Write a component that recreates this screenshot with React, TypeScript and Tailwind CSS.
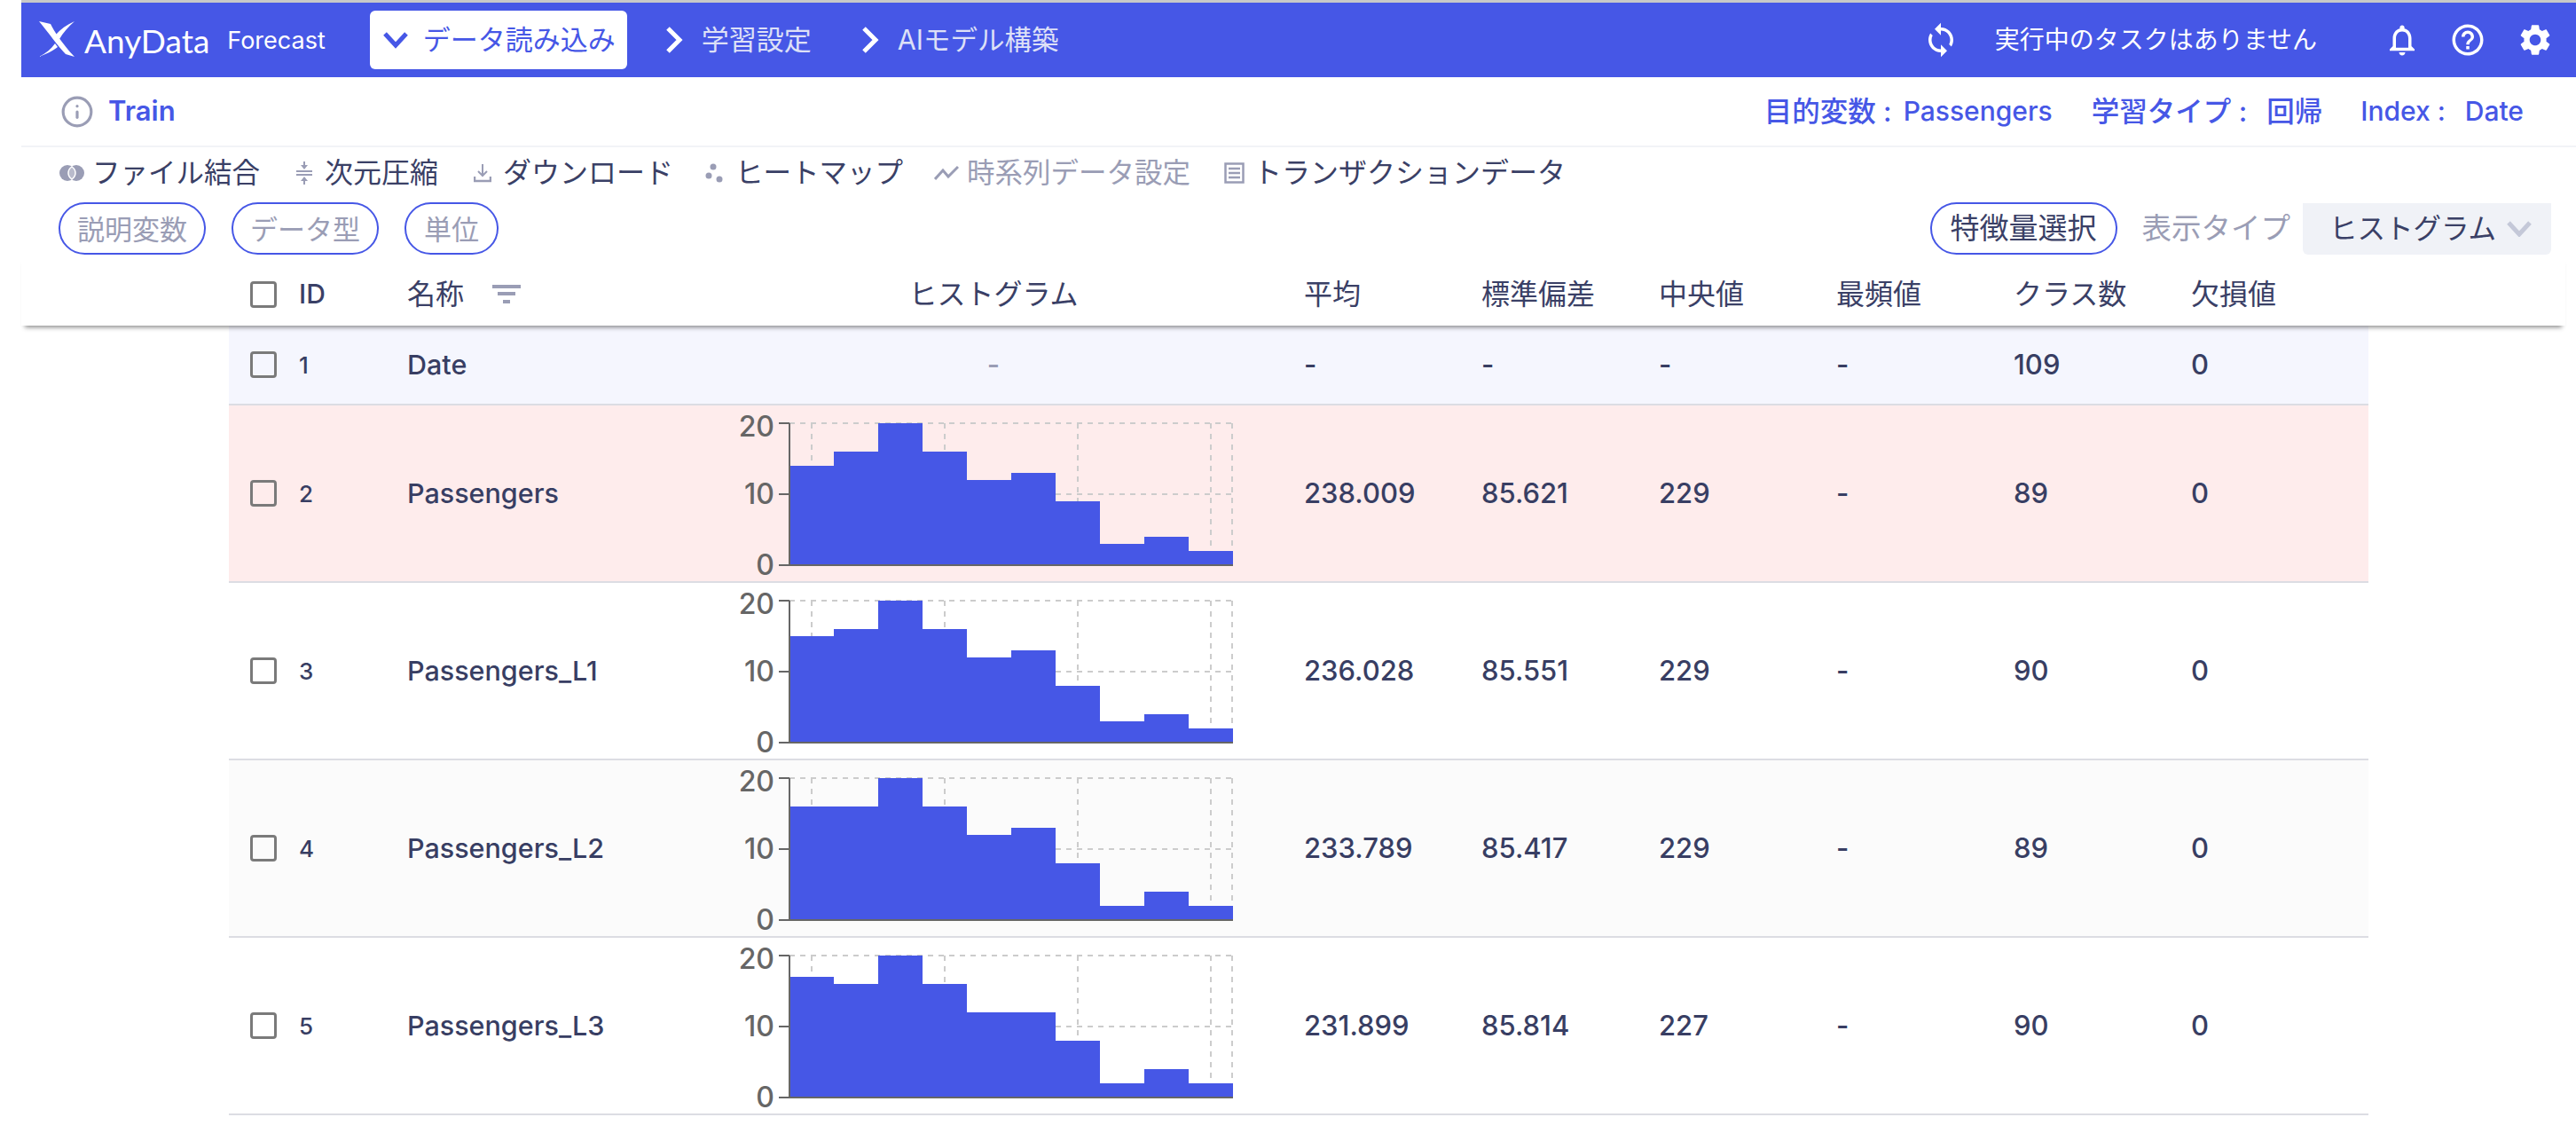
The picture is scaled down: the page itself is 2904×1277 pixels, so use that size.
import React from "react";
import { Info } from "lucide-react";

const BLUE = "#4657e6";
const hist: Record<string, number[]> = {
  a: [14, 16, 20, 16, 12, 13, 9, 3, 4, 2],
  b: [15, 16, 20, 16, 12, 13, 8, 3, 4, 2],
  c: [16, 16, 20, 16, 12, 13, 8, 2, 4, 2],
  d: [17, 16, 20, 16, 12, 12, 8, 2, 4, 2],
};

function Chart({ data }: { data: number[] }) {
  const top = 20;
  const bottom = 180;
  const left = 40;
  return (
    <svg width="540" height="198" viewBox="0 0 540 198" className="block overflow-visible">
      <g stroke="#cccccc" strokeWidth="2" strokeDasharray="6 6" fill="none">
        <line x1={left} x2={540} y1={top} y2={top} />
        <line x1={left} x2={540} y1={100} y2={100} />
        {[65, 215, 365, 515, 539].map((x) => (
          <line key={x} x1={x} x2={x} y1={top} y2={bottom} />
        ))}
      </g>
      {data.map((v, i) => (
        <rect key={i} x={left + i * 50} y={bottom - v * 8} width={50} height={v * 8} fill={BLUE} />
      ))}
      <g stroke="#666666" strokeWidth="2" fill="none">
        <line x1={left} x2={left} y1={top} y2={bottom} />
        <line x1={left} x2={540} y1={bottom} y2={bottom} />
        <line x1={28} x2={left} y1={top} y2={top} />
        <line x1={28} x2={left} y1={100} y2={100} />
        <line x1={28} x2={left} y1={bottom} y2={bottom} />
      </g>
      <g fill="#666666" fontSize="32" textAnchor="end" fontFamily="Inter, sans-serif">
        <text x={23} y={35}>20</text>
        <text x={23} y={111}>10</text>
        <text x={23} y={191}>0</text>
      </g>
    </svg>
  );
}

function Check() {
  return <span className="block w-[30px] h-[30px] border-[3.5px] border-[#7a7a7a] rounded-[4px]" />;
}

function Row({ id, name, data, vals, bg, h }: { id: number; name: string; data?: number[]; vals: string[]; bg: string; h: string }) {
  return (
    <div className={`flex items-center ${bg} ${h} border-b-2 border-[#dcdde3] text-[#383e63] text-[31px] font-medium`}>
      <div className="w-[79px] pl-[24px]"><Check /></div>
      <div className="w-[122px] text-[26px]">{id}</div>
      <div className="w-[391px] text-[30.5px]">{name}</div>
      <div className="w-[540px] mr-[80px] flex justify-center">
        {data ? <Chart data={data} /> : <span className="text-[#9a9db5]">-</span>}
      </div>
      {vals.map((v, i) => (
        <div key={i} className="w-[200px]">{v}</div>
      ))}
    </div>
  );
}

const Tool = ({ icon, text, cls }: { icon: React.ReactNode; text: string; cls: string }) => (
  <div className={`flex items-center ${cls}`}>
    {icon}
    <span>{text}</span>
  </div>
);

export default function App() {
  return (
    <div className="w-[2904px] h-[1277px] overflow-hidden bg-white pl-[24px] [font-family:Inter,'Noto_Sans_CJK_JP',sans-serif]">
      <div className="border-t-[3px] border-[#c8c8c8]">
        {/* nav */}
        <div className="h-[84px] bg-[#4657e6] flex items-center text-white">
          <svg width="40" height="40" viewBox="0 0 40 40" className="ml-[20px] mb-[2px]" fill="#fff">
            <path d="M0 0L13 3C17 11 25 24 40 40L30 37C22 29 10 12 0 0Z" />
            <path d="M40 0C31 4 24 9 19 15L23 20C27 13 33 6 40 0Z" />
            <path d="M0 40C8 36 14 31 18 25L21 29C16 33 8 37 0 40Z" />
          </svg>
          <span className="ml-[11px] text-[37px] [font-family:Lato,sans-serif] leading-none">AnyData</span>
          <span className="ml-[20px] text-[27px] leading-none">Forecast</span>
          <div className="ml-[50px] w-[290px] h-[66px] bg-white rounded-[6px] flex items-center text-[#4657e6] text-[31px]">
            <svg width="30" height="20" viewBox="0 0 30 20" className="ml-[14px] mr-[16px]" fill="none" stroke="#4657e6" strokeWidth="5">
              <path d="M3 3L15 16L27 3" />
            </svg>
            データ読み込み
          </div>
          <svg width="20" height="30" viewBox="0 0 20 30" className="ml-[43px]" fill="none" stroke="#fff" strokeWidth="5">
            <path d="M3 2L16 15L3 28" />
          </svg>
          <span className="ml-[21px] text-[31px] text-[#dde0f7]">学習設定</span>
          <svg width="20" height="30" viewBox="0 0 20 30" className="ml-[56px]" fill="none" stroke="#fff" strokeWidth="5">
            <path d="M3 2L16 15L3 28" />
          </svg>
          <span className="ml-[21px] text-[30.5px] text-[#dde0f7]">AIモデル構築</span>
          <svg width="42" height="42" viewBox="0 0 24 24" fill="#fff" className="ml-auto">
            <path d="M12 4V1L8 5l4 4V6c3.31 0 6 2.69 6 6 0 1.01-.25 1.97-.7 2.8l1.46 1.46C19.54 15.03 20 13.57 20 12c0-4.42-3.58-8-8-8zm0 14c-3.31 0-6-2.69-6-6 0-1.01.25-1.97.7-2.8L5.24 7.74C4.46 8.97 4 10.43 4 12c0 4.42 3.58 8 8 8v3l4-4-4-4v3z" />
          </svg>
          <span className="ml-[40px] text-[28px]">実行中のタスクはありません</span>
          <svg width="42" height="42" viewBox="0 0 24 24" fill="#fff" className="ml-[75px]">
            <path d="M12 22c1.1 0 2-.9 2-2h-4c0 1.1.9 2 2 2zm6-6v-5c0-3.07-1.63-5.64-4.5-6.32V4c0-.83-.67-1.5-1.5-1.5s-1.5.67-1.5 1.5v.68C7.64 5.36 6 7.92 6 11v5l-2 2v1h16v-1l-2-2zm-2 1H8v-6c0-2.48 1.51-4.5 4-4.5s4 2.02 4 4.5v6z" />
          </svg>
          <svg width="42" height="42" viewBox="0 0 24 24" fill="#fff" className="ml-[32px]">
            <path d="M11 18h2v-2h-2v2zm1-16C6.48 2 2 6.48 2 12s4.48 10 10 10 10-4.48 10-10S17.52 2 12 2zm0 18c-4.41 0-8-3.59-8-8s3.59-8 8-8 8 3.59 8 8-3.59 8-8 8zm0-14c-2.21 0-4 1.79-4 4h2c0-1.1.9-2 2-2s2 .9 2 2c0 2-3 1.75-3 5h2c0-2.25 3-2.5 3-5 0-2.21-1.79-4-4-4z" />
          </svg>
          <svg width="42" height="42" viewBox="0 0 24 24" fill="#fff" className="ml-[34px] mr-[25px]">
            <path d="M19.14 12.94c.04-.3.06-.61.06-.94 0-.32-.02-.64-.07-.94l2.03-1.58c.18-.14.23-.41.12-.61l-1.92-3.32c-.12-.22-.37-.29-.59-.22l-2.39.96c-.5-.38-1.03-.7-1.62-.94l-.36-2.54c-.04-.24-.24-.41-.48-.41h-3.84c-.24 0-.43.17-.47.41l-.36 2.54c-.59.24-1.13.57-1.62.94l-2.39-.96c-.22-.08-.47 0-.59.22L2.74 8.87c-.12.21-.08.47.12.61l2.03 1.58c-.05.3-.09.63-.09.94s.02.64.07.94l-2.03 1.58c-.18.14-.23.41-.12.61l1.92 3.32c.12.22.37.29.59.22l2.39-.96c.5.38 1.03.7 1.62.94l.36 2.54c.05.24.24.41.48.41h3.84c.24 0 .44-.17.47-.41l.36-2.54c.59-.24 1.13-.56 1.62-.94l2.39.96c.22.08.47 0 .59-.22l1.92-3.32c.12-.22.07-.47-.12-.61l-2.01-1.58zM12 15.6c-1.98 0-3.6-1.62-3.6-3.6s1.62-3.6 3.6-3.6 3.6 1.62 3.6 3.6-1.62 3.6-3.6 3.6z" />
          </svg>
        </div>

        {/* info row */}
        <div className="h-[79px] border-b-2 border-[#f2f3f7] flex items-center text-[#4657e6] text-[30px] font-medium">
          <Info size={38} strokeWidth={2} color="#9a9db5" className="ml-[44px]" />
          <span className="ml-[16px] text-[31px] font-semibold">Train</span>
          <div className="ml-auto mr-[59px] flex items-center">
            <span className="text-[31.5px]">目的変数 : </span>
            <span className="ml-[13px]">Passengers</span>
            <span className="ml-[44px] text-[31.5px]">学習タイプ :</span>
            <span className="ml-[22px] text-[31.5px]">回帰</span>
            <span className="ml-[43px]">Index :</span>
            <span className="ml-[22px]">Date</span>
          </div>
        </div>

        {/* toolbar */}
        <div className="h-[58px] mb-[3px] pl-[43px] flex items-center text-[#3a4066] text-[31.5px]">
          <Tool
            cls="mr-[40px]"
            text="ファイル結合"
            icon={
              <svg width="28" height="18" viewBox="0 0 28 18" className="mr-[9px]">
                <circle cx="9" cy="9" r="9" fill="#9a9db5" />
                <circle cx="19" cy="9" r="9" fill="#9a9db5" />
                <path d="M14 2C11 4 10 6.5 10 9s1 5 4 7c3-2 4-4.5 4-7s-1-5-4-7Z" fill="#b9bbcc" stroke="#fff" strokeWidth="1.5" />
              </svg>
            }
          />
          <Tool
            cls="mr-[40px] text-[32px]"
            text="次元圧縮"
            icon={
              <svg width="20" height="26" viewBox="0 0 20 26" className="mr-[13px]" fill="#9a9db5">
                <path d="M9 0h2v4h3l-4 5-4-5h3zM1 10h18v2H1zM1 14h18v2H1zM10 17l4 5h-3v4H9v-4H6z" />
              </svg>
            }
          />
          <Tool
            cls="mr-[36px] text-[32px]"
            text="ダウンロード"
            icon={
              <svg width="20" height="21" viewBox="0 0 20 21" className="mr-[13px]" fill="none" stroke="#9a9db5" strokeWidth="2">
                <path d="M10 0V12M5 8l5 5 5-5" />
                <path d="M1 14v5h18v-5" strokeWidth="2.5" />
              </svg>
            }
          />
          <Tool
            cls="mr-[35px]"
            text="ヒートマップ"
            icon={
              <svg width="20" height="22" viewBox="0 0 20 22" className="mr-[14px]" fill="#9a9db5">
                <circle cx="9" cy="4" r="3.5" />
                <circle cx="4" cy="14" r="3.5" />
                <circle cx="16" cy="18" r="3.5" />
              </svg>
            }
          />
          <Tool
            cls="mr-[38px] text-[#9a9db5]"
            text="時系列データ設定"
            icon={
              <svg width="28" height="18" viewBox="0 0 28 18" className="mr-[9px]" fill="none" stroke="#9a9db5" strokeWidth="3">
                <path d="M1 16L10 6L16 13L27 2" />
              </svg>
            }
          />
          <Tool
            cls="text-[32px]"
            text="トランザクションデータ"
            icon={
              <svg width="23" height="24" viewBox="0 0 23 24" className="mr-[10px]" fill="none" stroke="#9a9db5" strokeWidth="2.5">
                <rect x="1.5" y="1.5" width="20" height="21" />
                <path d="M5 7h13M5 12h13M5 17h13" />
              </svg>
            }
          />
        </div>

        {/* chips row */}
        <div className="h-[61px] flex items-center">
          <div className="ml-[42px] flex gap-[29px] text-[31px] text-[#9a9db5]">
            <span className="h-[59px] pt-[3px] px-[19px] flex items-center rounded-full border-2 border-[#4657e6]">説明変数</span>
            <span className="h-[59px] pt-[3px] px-[19px] flex items-center rounded-full border-2 border-[#4657e6]">データ型</span>
            <span className="h-[59px] pt-[3px] px-[20px] flex items-center rounded-full border-2 border-[#4657e6]">単位</span>
          </div>
          <div className="ml-auto mr-[28px] flex items-center text-[33px]">
            <span className="h-[59px] px-[21px] flex items-center rounded-full border-2 border-[#4657e6] text-[#3a4066]">特徴量選択</span>
            <span className="ml-[28px] text-[33.5px] text-[#9a9db5]">表示タイプ</span>
            <span className="ml-[14px] w-[280px] h-[58px] pl-[30px] flex items-center bg-[#f0f2f7] rounded-b-[6px] text-[#3a4066] text-[31.5px]">
              ヒストグラム
              <svg width="28" height="18" viewBox="0 0 28 18" className="ml-[12px]" fill="none" stroke="#c4c8d8" strokeWidth="5">
                <path d="M2 2L14 15L26 2" />
              </svg>
            </span>
          </div>
        </div>

        {/* table head */}
        <div className="relative z-10 w-[2868px] h-[79px] pt-[8px] pl-[234px] bg-white shadow-[0_6px_5px_-4px_rgba(0,0,0,0.45)] flex items-center text-[#3a4066] text-[32px]">
          <div className="w-[79px] pl-[24px]"><Check /></div>
          <div className="w-[122px] font-medium text-[30px]">ID</div>
          <div className="w-[391px] flex items-center">
            名称
            <svg width="32" height="21" viewBox="0 0 32 21" className="ml-[32px]" fill="#9a9db5">
              <rect x="0" y="0" width="32" height="4" />
              <rect x="6" y="8" width="20" height="4" />
              <rect x="12" y="17" width="8" height="4" />
            </svg>
          </div>
          <div className="w-[540px] mr-[80px] text-center">ヒストグラム</div>
          {["平均", "標準偏差", "中央値", "最頻値", "クラス数", "欠損値"].map((t) => (
            <div key={t} className="w-[200px]">{t}</div>
          ))}
        </div>

        {/* rows */}
        <div className="ml-[234px] w-[2412px]">
          <Row id={1} name="Date" vals={["-", "-", "-", "-", "109", "0"]} bg="bg-[#f5f6fe]" h="h-[90px]" />
          <Row id={2} name="Passengers" data={hist.a} vals={["238.009", "85.621", "229", "-", "89", "0"]} bg="bg-[#feecec]" h="h-[200px]" />
          <Row id={3} name="Passengers_L1" data={hist.b} vals={["236.028", "85.551", "229", "-", "90", "0"]} bg="bg-white" h="h-[200px]" />
          <Row id={4} name="Passengers_L2" data={hist.c} vals={["233.789", "85.417", "229", "-", "89", "0"]} bg="bg-[#fbfbfb]" h="h-[200px]" />
          <Row id={5} name="Passengers_L3" data={hist.d} vals={["231.899", "85.814", "227", "-", "90", "0"]} bg="bg-white" h="h-[200px]" />
        </div>
      </div>
    </div>
  );
}
